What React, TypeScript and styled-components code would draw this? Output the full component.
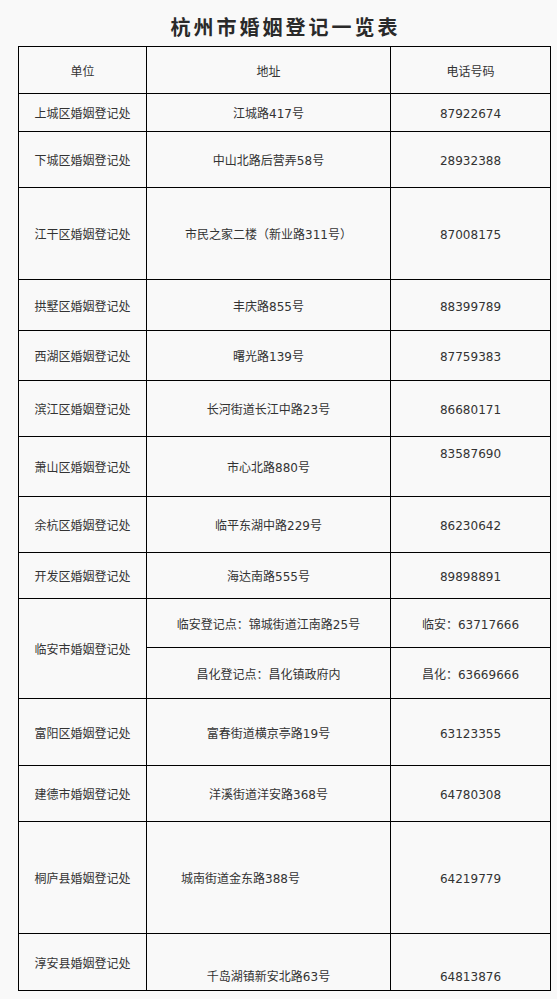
import { FC, ReactElement, Fragment } from 'react';
import styled, { createGlobalStyle } from 'styled-components';

// Page-wide reset
const GlobalStyle = createGlobalStyle`
  html, body {
    margin: 0;
    padding: 0;
    background: #f9f9f9;
  }
  body {
    font-family: "DejaVu Sans", "Noto Sans CJK SC", sans-serif;
    color: #333;
  }
`;

type Office = {
  name: string;
  address: string;
  phone: string;
  height: number;
  addrAlign?: 'left' | 'center';
  phoneAlign?: 'top' | 'middle' | 'bottom';
  addrValign?: 'top' | 'middle' | 'bottom';
  sub?: { address: string; phone: string; height: number }[];
};

const offices: Office[] = [
  { name: '上城区婚姻登记处', address: '江城路417号', phone: '87922674', height: 38 },
  { name: '下城区婚姻登记处', address: '中山北路后营弄58号', phone: '28932388', height: 56 },
  { name: '江干区婚姻登记处', address: '市民之家二楼（新业路311号）', phone: '87008175', height: 92 },
  { name: '拱墅区婚姻登记处', address: '丰庆路855号', phone: '88399789', height: 51 },
  { name: '西湖区婚姻登记处', address: '曙光路139号', phone: '87759383', height: 50 },
  { name: '滨江区婚姻登记处', address: '长河街道长江中路23号', phone: '86680171', height: 56 },
  { name: '萧山区婚姻登记处', address: '市心北路880号', phone: '83587690', height: 60, phoneAlign: 'top' },
  { name: '余杭区婚姻登记处', address: '临平东湖中路229号', phone: '86230642', height: 56 },
  { name: '开发区婚姻登记处', address: '海达南路555号', phone: '89898891', height: 46 },
  {
    name: '临安市婚姻登记处',
    address: '',
    phone: '',
    height: 0,
    sub: [
      { address: '临安登记点：锦城街道江南路25号', phone: '临安：63717666', height: 49 },
      { address: '昌化登记点：昌化镇政府内', phone: '昌化：63669666', height: 51 },
    ],
  },
  { name: '富阳区婚姻登记处', address: '富春街道横京亭路19号', phone: '63123355', height: 67 },
  { name: '建德市婚姻登记处', address: '洋溪街道洋安路368号', phone: '64780308', height: 56 },
  { name: '桐庐县婚姻登记处', address: '城南街道金东路388号', phone: '64219779', height: 112, addrAlign: 'left' },
  {
    name: '淳安县婚姻登记处',
    address: '千岛湖镇新安北路63号',
    phone: '64813876',
    height: 57,
    phoneAlign: 'bottom',
    addrValign: 'bottom',
  },
];

const App: FC = (): ReactElement => {
  return (
    <Page>
      <GlobalStyle />
      <Title>杭州市婚姻登记一览表</Title>

      <Table>
        <colgroup>
          <col style={{ width: 128 }} />
          <col style={{ width: 244 }} />
          <col style={{ width: 160 }} />
        </colgroup>
        <tbody>
          <Row $h={47}>
            <Cell>单位</Cell>
            <Cell>地址</Cell>
            <Cell>电话号码</Cell>
          </Row>

          {offices.map((o) =>
            o.sub ? (
              <Fragment key={o.name}>
                <Row $h={o.sub[0].height}>
                  <Cell rowSpan={2}>{o.name}</Cell>
                  <Cell>{o.sub[0].address}</Cell>
                  <Cell>{o.sub[0].phone}</Cell>
                </Row>
                <Row $h={o.sub[1].height}>
                  <Cell>{o.sub[1].address}</Cell>
                  <Cell>{o.sub[1].phone}</Cell>
                </Row>
              </Fragment>
            ) : (
              <Row key={o.name} $h={o.height}>
                <Cell>{o.name}</Cell>
                <Cell $align={o.addrAlign} $valign={o.addrValign}>
                  {o.address}
                </Cell>
                <Cell $valign={o.phoneAlign}>{o.phone}</Cell>
              </Row>
            )
          )}
        </tbody>
      </Table>
    </Page>
  );
};

const Page = styled.div`
  padding: 0 0 9px 18px;
  width: 532px;
`;

const Title = styled.h1`
  margin: 0;
  height: 46px;
  display: flex;
  align-items: center;
  justify-content: center;
  padding-top: 6px;
  padding-left: 3px;
  box-sizing: border-box;
  font-family: "Noto Sans CJK SC", sans-serif;
  font-size: 20px;
  font-weight: 700;
  letter-spacing: 3px;
  color: #2a2a2a;
`;

const Table = styled.table`
  width: 532px;
  border-collapse: collapse;
  table-layout: fixed;
  border: 1px solid #000;
`;

const Row = styled.tr<{ $h: number }>`
  height: ${(p) => p.$h}px;
`;

const Cell = styled.td<{ $align?: 'left' | 'center'; $valign?: 'top' | 'middle' | 'bottom' }>`
  border: 1px solid #000;
  padding: ${(p) =>
    p.$valign === 'top' ? '9px 4px 0' : p.$valign === 'bottom' ? '0 4px 5px' : '3px 4px 0'};
  padding-left: ${(p) => (p.$align === 'left' ? '34px' : '4px')};
  text-align: ${(p) => p.$align ?? 'center'};
  vertical-align: ${(p) => p.$valign ?? 'middle'};
  font-size: 12px;
  line-height: 16px;
  color: #333;
  white-space: nowrap;
`;

export default App;
